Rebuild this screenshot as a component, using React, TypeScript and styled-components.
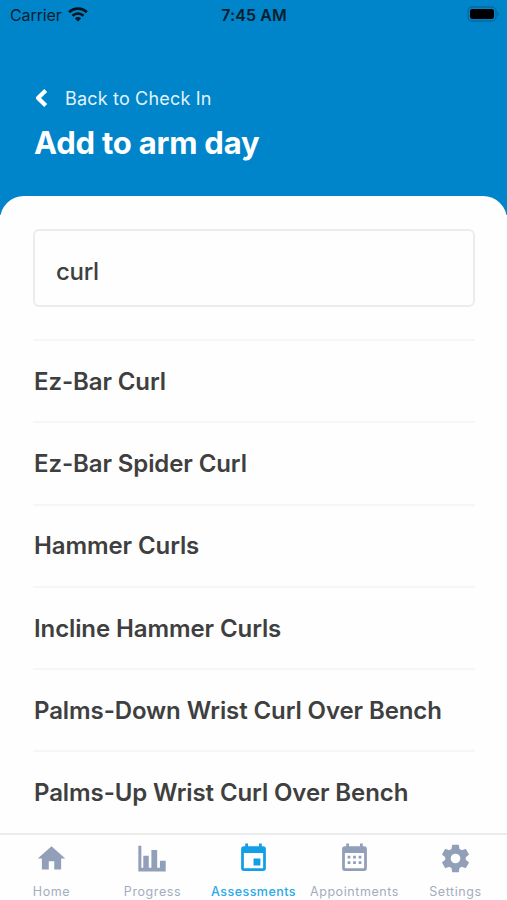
import React from "react";
import styled, { createGlobalStyle } from "styled-components";

const GlobalStyle = createGlobalStyle`
  * { box-sizing: border-box; }
  body { margin: 0; background: #fff; font-family: Inter, "Liberation Sans", sans-serif; }
`;

const Screen = styled.div`
  width: 507px;
  height: 900px;
  display: flex;
  flex-direction: column;
  overflow: hidden;
  background: linear-gradient(#0085ca 0 215px, #fefefe 215px);
`;

const Header = styled.header`
  height: 196px;
  flex: none;
  color: #fff;
`;

const StatusBar = styled.div`
  height: 30px;
  padding: 0 7px 0 10px;
  display: grid;
  grid-template-columns: 1fr auto 1fr;
  align-items: center;
  color: #08202e;
  font-size: 16px;
  line-height: 30px;
`;

const Carrier = styled.div`
  display: flex;
  align-items: center;
  gap: 6px;
  letter-spacing: -0.1px;

  svg { margin-top: -2px; }
`;

const Clock = styled.div`
  margin-left: -2px;
  font-weight: 600;
  letter-spacing: 0.1px;
`;

const BatterySlot = styled.div`
  display: flex;
  justify-content: flex-end;
  padding-bottom: 2px;
`;

const BackLink = styled.a`
  height: 24px;
  margin: 56px 0 0 34px;
  display: flex;
  align-items: center;
  gap: 16px;
  font-size: 18px;
  color: #e2f2fa;
  letter-spacing: 0.18px;
`;

const Title = styled.h1`
  margin: 13px 0 0 34px;
  font-size: 31px;
  line-height: 40px;
  font-weight: 700;
  letter-spacing: -0.22px;
`;

const Sheet = styled.main`
  flex: 1;
  min-height: 0;
  overflow: hidden;
  padding: 33px 32px 0 33px;
  border-radius: 24px 24px 0 0;
  background: #fefefe;
  color: #403f3f;
`;

const SearchField = styled.input`
  display: block;
  width: 442px;
  height: 78px;
  padding: 7px 21px 0;
  border: 2px solid #ececec;
  border-radius: 6px;
  outline: none;
  background: #fefefe;
  color: #403f3f;
  font: 500 24px Inter, "Liberation Sans", sans-serif;
  letter-spacing: -0.3px;
`;

const ExerciseList = styled.ul`
  margin: 32px 0 0;
  padding: 0;
  list-style: none;
`;

const Exercise = styled.li`
  height: 82.3px;
  padding-left: 1px;
  display: flex;
  align-items: center;
  border-top: 2px solid #f6f6f6;
  font-size: 24px;
  font-weight: 600;
  letter-spacing: -0.1px;
  white-space: nowrap;
`;

const TabBar = styled.nav`
  height: 67px;
  flex: none;
  display: grid;
  grid-template-columns: repeat(5, 101px);
  justify-content: center;
  border-top: 2px solid #ececec;
  background: #fefefe;
`;

const Tab = styled.a<{ $active?: boolean }>`
  display: flex;
  flex-direction: column;
  align-items: center;
  padding-top: 7px;
  color: ${(p) => (p.$active ? "#129fe6" : "#929fb8")};
`;

const TabLabel = styled.span<{ $active?: boolean }>`
  margin-top: 9px;
  font-size: 12.5px;
  line-height: 16px;
  font-weight: ${(p) => (p.$active ? 500 : 400)};
  letter-spacing: ${(p) => (p.$active ? "0.46px" : "0.58px")};
  white-space: nowrap;
  color: ${(p) => (p.$active ? "#2ba9e8" : "#a3adbf")};
`;

const TabIcon = styled.svg`
  width: 33px;
  height: 33px;
  flex: none;
  overflow: visible;
  fill: currentColor;
`;

const tabs = [
  { label: "Home", path: "M10 20v-6h4v6h5v-8h3L12 3 2 12h3v8z" },
  {
    label: "Progress",
    path: "M1.7 2.7h2.2v16h1.4V10h4v8.7h1.9V5.8h4.2v12.9h2v-5.1h4.2v7.9H2.2a.5.5 0 0 1-.5-.5z",
  },
  {
    label: "Assessments",
    active: true,
    path: "M19 19H5V8h14m-3-7v2H8V1H6v2H5a2 2 0 0 0-2 2v14a2 2 0 0 0 2 2h14a2 2 0 0 0 2-2V5a2 2 0 0 0-2-2h-1V1m-1 11h-5v5h5z",
  },
  {
    label: "Appointments",
    path: "M19 19H5V8h14m-3-7v2H8V1H6v2H5a2 2 0 0 0-2 2v14a2 2 0 0 0 2 2h14a2 2 0 0 0 2-2V5a2 2 0 0 0-2-2h-1V1M7 10h2v2H7zm4 0h2v2h-2zm4 0h2v2h-2zm-8 4h2v2H7zm4 0h2v2h-2zm4 0h2v2h-2z",
  },
  {
    label: "Settings",
    path: "M12 15.5A3.5 3.5 0 0 1 8.5 12 3.5 3.5 0 0 1 12 8.5a3.5 3.5 0 0 1 3.5 3.5 3.5 3.5 0 0 1-3.5 3.5m7.43-2.53c.04-.32.07-.64.07-.97s-.03-.66-.07-1l2.11-1.63c.19-.15.24-.42.12-.64l-2-3.46c-.12-.22-.39-.31-.61-.22l-2.49 1c-.52-.39-1.06-.73-1.69-.98l-.37-2.65A.506.506 0 0 0 14 2h-4c-.25 0-.46.18-.5.42l-.37 2.65c-.63.25-1.17.59-1.69.98l-2.49-1c-.22-.09-.49 0-.61.22l-2 3.46c-.13.22-.07.49.12.64L4.57 11c-.04.34-.07.67-.07 1s.03.65.07.97l-2.11 1.66c-.19.15-.25.42-.12.64l2 3.46c.12.22.39.3.61.22l2.49-1.01c.52.4 1.06.74 1.69.99l.37 2.65c.04.24.25.42.5.42h4c.25 0 .46-.18.5-.42l.37-2.65c.63-.26 1.17-.59 1.69-.99l2.49 1.01c.22.08.49 0 .61-.22l2-3.46c.12-.22.07-.49-.12-.64z",
  },
];

const exercises = [
  "Ez-Bar Curl",
  "Ez-Bar Spider Curl",
  "Hammer Curls",
  "Incline Hammer Curls",
  "Palms-Down Wrist Curl Over Bench",
  "Palms-Up Wrist Curl Over Bench",
];

const WifiIcon = () => (
  <svg width="20" height="15" viewBox="0 0 20 15" fill="none" stroke="#03141f">
    <path d="M1.2 5.2a12.6 12.6 0 0 1 17.6 0" strokeWidth="2.9" />
    <path d="M4.5 8.7a7.9 7.9 0 0 1 11 0" strokeWidth="2.6" />
    <path d="M10 14.6 6.9 11.4a4.5 4.5 0 0 1 6.2 0z" fill="#03141f" stroke="none" />
  </svg>
);

const BatteryIcon = () => (
  <svg width="33" height="16" viewBox="0 0 33 16">
    <rect x="1" y="1" width="28" height="14" rx="4" fill="none" stroke="#056aa0" strokeWidth="1.4" />
    <rect x="3" y="3" width="24" height="10" rx="2.3" fill="#000" />
    <path d="M30.5 5.8c1.9.7 1.9 3.7 0 4.4z" fill="#056aa0" />
  </svg>
);

const BackIcon = () => (
  <svg width="15" height="20" viewBox="0 0 15 20">
    <path d="M11.7 2.4 4 10l7.7 7.6" fill="none" stroke="#fff" strokeWidth="4.2" strokeLinejoin="round" />
  </svg>
);

export default function App() {
  return (
    <>
      <GlobalStyle />
      <Screen>
        <Header>
          <StatusBar>
            <Carrier>
              Carrier
              <WifiIcon />
            </Carrier>
            <Clock>7:45 AM</Clock>
            <BatterySlot>
              <BatteryIcon />
            </BatterySlot>
          </StatusBar>
          <BackLink>
            <BackIcon />
            Back to Check In
          </BackLink>
          <Title>Add to arm day</Title>
        </Header>
        <Sheet>
          <SearchField defaultValue="curl" aria-label="Search exercises" />
          <ExerciseList>
            {exercises.map((name) => (
              <Exercise key={name}>{name}</Exercise>
            ))}
          </ExerciseList>
        </Sheet>
        <TabBar>
          {tabs.map((tab) => (
            <Tab key={tab.label} $active={tab.active}>
              <TabIcon viewBox="0 0 24 24">
                <path d={tab.path} />
              </TabIcon>
              <TabLabel $active={tab.active}>{tab.label}</TabLabel>
            </Tab>
          ))}
        </TabBar>
      </Screen>
    </>
  );
}
